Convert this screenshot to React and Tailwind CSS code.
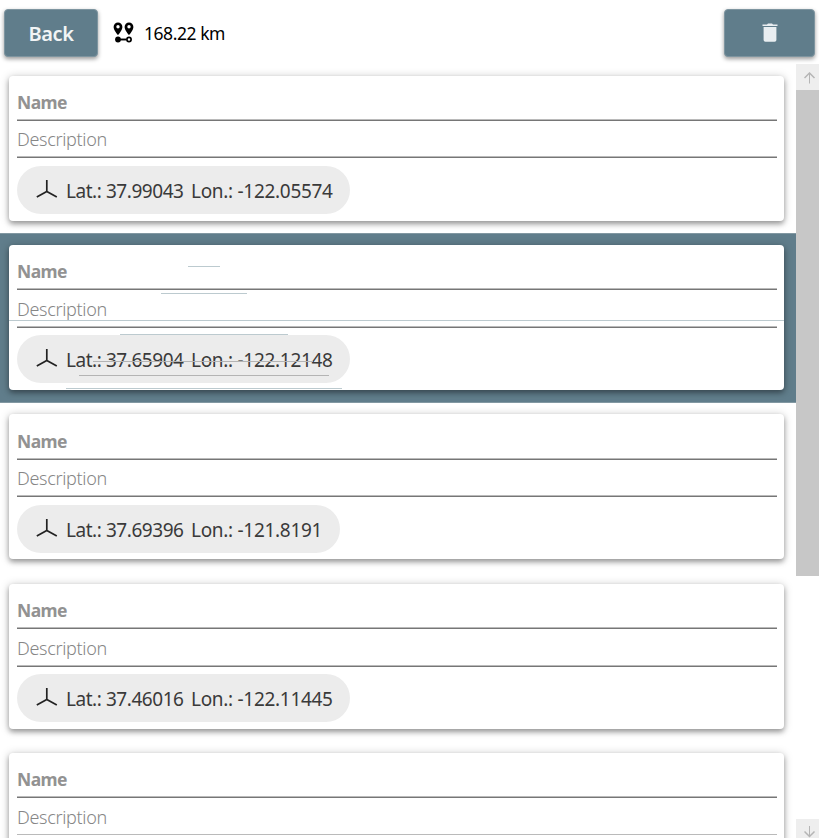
const points = [
  { lat: '37.99043', lon: '-122.05574', item: 'h-[169px] pt-3', name: 'h-[45px] border-b', nameText: 'pt-[14px]', desc: 'h-[37px] border-b', descText: 'pt-[6px]', gap: 'mt-2', chip: 'w-[333px]' },
  { lat: '37.65904', lon: '-122.12148', item: 'h-[170px] pt-3', name: 'h-[45px] border-b', nameText: 'pt-[14px]', desc: 'h-[38px] border-b', descText: 'pt-[7px]', gap: 'mt-[7px]', chip: 'w-[333px]', selected: true },
  { lat: '37.69396', lon: '-121.8191', item: 'h-[169px] pt-[11px]', name: 'h-[46px] border-b', nameText: 'pt-[15px]', desc: 'h-[37px] border-b', descText: 'pt-[6px]', gap: 'mt-2', chip: 'w-[323px]' },
  { lat: '37.46016', lon: '-122.11445', item: 'h-[169px] pt-3', name: 'h-[45px] border-b', nameText: 'pt-[14px]', desc: 'h-[38px] border-b', descText: 'pt-[7px]', gap: 'mt-[7px]', chip: 'w-[333px]' },
  { item: 'h-[169px] pt-3', name: 'h-[45px] border-b', nameText: 'pt-[14px]', desc: 'h-[37px]', descText: 'pt-[7px]' },
];

function RouteIcon() {
  return (
    <svg width="22" height="22" viewBox="0 0 22 22" className="block">
      <path
        fillRule="evenodd"
        d="M5 .5a4.400 4.400 0 0 0-4.400 4.400C.6 8.200 5 13 5 13s4.400-4.800 4.400-8.100A4.400 4.400 0 0 0 5 .5Zm0 2.500a1.700 1.700 0 1 1 0 3.400 1.700 1.700 0 0 1 0-3.400ZM16 .5a4.400 4.400 0 0 0-4.400 4.400C11.600 8.200 16 13 16 13s4.400-4.800 4.400-8.100A4.400 4.400 0 0 0 16 .5Zm0 2.500a1.700 1.700 0 1 1 0 3.400 1.700 1.700 0 0 1 0-3.400Z"
      />
      <circle cx="5" cy="17.500" r="2.900" />
      <path d="M7 17.500h6.500" stroke="#000" strokeWidth="1.900" />
      <circle cx="16" cy="17.500" r="2.100" fill="none" stroke="#000" strokeWidth="1.700" />
    </svg>
  );
}

function TrashIcon() {
  return (
    <svg width="16" height="20" viewBox="0 0 16 20" className="block" fill="#e9eef1">
      <path d="M.5 1.500h4.500L6 .5h4l1 1h4.500V3H.5ZM1.600 4h12.800v13a1.800 1.800 0 0 1-1.800 1.800H3.400A1.800 1.800 0 0 1 1.600 17Z" />
    </svg>
  );
}

function AxesIcon() {
  return (
    <svg width="22" height="20" viewBox="0 0 22 20" className="block shrink-0" fill="none" stroke="#222" strokeWidth="1.700">
      <path d="M10.800 0v11.500M.8 17 10.800 11.500l10 5.500" />
    </svg>
  );
}

function Arrow({ down }) {
  return (
    <svg width="12" height="12" viewBox="0 0 12 12" className="block" fill="none" stroke="#b5b5b5">
      <path d={down ? 'M5.500 0v10.500' : 'M5.500 1v10.500'} />
      <path d={down ? 'M.5 5.500l5 5 5-5' : 'M.5 6l5-5 5 5'} strokeWidth="1.500" />
    </svg>
  );
}

function Streaks() {
  return (
    <div className="pointer-events-none absolute inset-0">
      <div className="absolute left-[188px] top-[32px] h-px w-8 bg-[#bccacf]" />
      <div className="absolute left-[161px] top-[59px] h-px w-[86px] bg-[#bccacf]" />
      <div className="absolute left-[9px] top-[86px] h-px w-[775px] bg-[#bccacf]" />
      <div className="absolute left-[120px] top-[100px] h-px w-[168px] bg-[#bccacf]" />
      <div className="absolute left-[93px] top-[127px] h-px w-[220px] bg-[#b4b4b4]" />
      <div className="absolute left-[79px] top-[141px] h-px w-[250px] bg-[#b4b4b4]" />
      <div className="absolute left-[66px] top-[154px] h-px w-[276px] bg-[#bccacf]" />
    </div>
  );
}

function Waypoint({ point }) {
  return (
    <div className={`relative shrink-0 pr-3 pl-[9px] ${point.item} ${point.selected ? 'border-y border-[#8298a2] bg-[#607d8b] !pt-[11px]' : ''}`}>
      <div className="h-[145px] rounded-[4px] bg-white pr-[7px] pl-2 shadow-[0_3px_5px_rgba(0,0,0,0.3),0_1px_10px_rgba(0,0,0,0.22)]">
        <div className={`border-[#767676] ${point.name}`}>
          <div className={`h-full border-b border-[#bababa] text-[17.500px] leading-6 font-bold text-[#929292] ${point.nameText}`}>
            <span className="inline-block tracking-[-0.6px]">Name</span>
          </div>
        </div>
        <div className={`border-[#767676] ${point.desc}`}>
          <div className={`h-full border-b border-[#bababa] text-[18px] leading-6 font-light text-[#868686] ${point.descText}`}>
            <span className="inline-block tracking-[-0.33px]">Description</span>
          </div>
        </div>
        {point.lat && (
          <div className={`flex h-12 items-center rounded-full bg-[#ececec] pl-[19px] text-[19px] whitespace-nowrap text-[#3a3a3a] ${point.gap} ${point.chip}`}>
            <AxesIcon />
            <span className="ml-2 w-[117px] pt-[3px] tracking-[-0.45px]">Lat.: {point.lat}</span>
            <span className="ml-2 pt-[3px] tracking-[-0.3px]">Lon.: {point.lon}</span>
          </div>
        )}
      </div>
      {point.selected && <Streaks />}
    </div>
  );
}

export default function App() {
  return (
    <div className="flex h-[838px] w-[819px] flex-col overflow-hidden bg-white font-['Noto_Sans',sans-serif]">
      <header className="flex h-16 shrink-0 items-start pt-2 pr-1 pl-1">
        <button className="h-12 w-[94px] mt-px rounded-[4px] border border-[#7e95a0] bg-[#607d8b] pt-px text-[20px] font-semibold tracking-[-0.4px] text-[#f1f4f5] shadow-[0_2px_4px_rgba(0,0,0,0.4)]">
          Back
        </button>
        <div className="ml-[15px] flex h-[50px] items-center text-[17.500px] text-black">
          <RouteIcon />
          <span className="ml-[9px] tracking-[-0.45px]">168.22 km</span>
        </div>
        <button className="mt-px ml-auto flex h-12 w-[91px] items-center justify-center rounded-[4px] border border-[#7e95a0] bg-[#607d8b] shadow-[0_2px_4px_rgba(0,0,0,0.4)]">
          <TrashIcon />
        </button>
      </header>
      <div className="flex h-[774px]">
        <main className="flex w-[796px] flex-col overflow-hidden">
          {points.map((point, index) => (
            <Waypoint key={index} point={point} />
          ))}
        </main>
        <aside className="flex w-[23px] flex-col overflow-hidden">
          <div className="h-[26px] shrink-0 bg-[#eeeeee] pt-2 pl-2">
            <Arrow />
          </div>
          <div className="h-[486px] shrink-0 bg-[#c7c7c7]" />
          <div className="mt-auto h-[19px] shrink-0 bg-[#eeeeee] pt-[7px] pl-2">
            <Arrow down />
          </div>
        </aside>
      </div>
    </div>
  );
}
